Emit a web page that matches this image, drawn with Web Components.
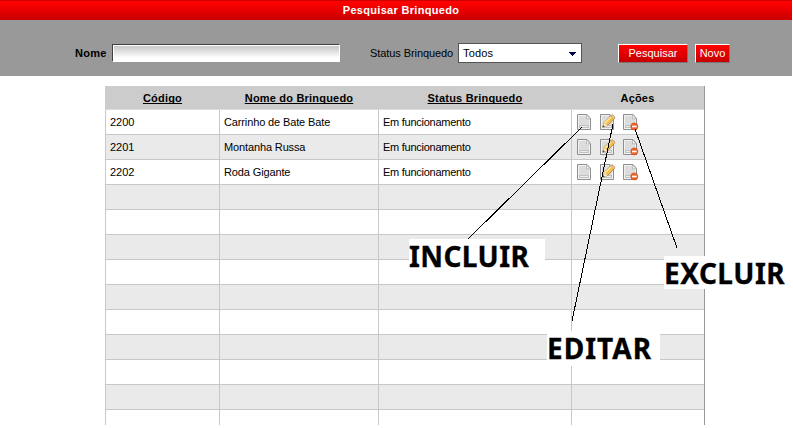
<!DOCTYPE html>
<html lang="pt-BR"><head><meta charset="utf-8"><title>Pesquisar Brinquedo</title>
<style>
html,body{margin:0;background:#fff;overflow:hidden}
body{width:793px;height:428px;position:relative;font:11px/13px "Liberation Sans",Arial,sans-serif;color:#000}
</style></head><body>
<toy-page></toy-page>
<script>
function define(name, html, setup){
  customElements.define(name, class extends HTMLElement{
    connectedCallback(){
      if(this.shadowRoot) return;
      const t=document.createElement('template');
      t.innerHTML=html;
      this.attachShadow({mode:'open'}).append(t.content.cloneNode(true));
      if(setup) setup(this,this.shadowRoot);
    }
  });
}
define('title-bar',`<style>
:host{display:block;box-sizing:border-box;height:20px;border-top:1px solid #c00;background:linear-gradient(#f00,#f00 10%,#c80000);color:#fff;font-weight:bold;text-align:center;padding:3px 0 0 10px;letter-spacing:.31px}
</style><slot></slot>`);
define('text-field',`<style>
:host{display:block;box-sizing:border-box;width:228px;height:18px;border:1px solid #fff;border-top-color:#404040;border-left-color:#404040;padding:1px 0 0 1px;background:#fff}
div{height:15px;background:linear-gradient(#c8c8c8,#fff 80%)}
</style><div></div>`);
define('select-field',`<style>
:host{display:flex;box-sizing:border-box;width:124px;height:20px;border:1px solid #555;background:#fff;justify-content:space-between;align-items:center;padding:0 5px 0 4px;letter-spacing:.15px}
svg{display:block;margin-top:2px}
</style><slot></slot><svg width="7" height="4" shape-rendering="crispEdges"><path d="M0 0H7V1H6V2H5V3H4V4H3V3H2V2H1V1H0Z" fill="#005"/></svg>`);
define('red-button',`<style>
:host{display:block;box-sizing:border-box;height:19px;border:1px solid #fff;border-right-color:#777;border-bottom-color:#777;background:linear-gradient(#f00,#c60000);color:#fff;text-align:center;padding-top:2px;white-space:nowrap}
</style><slot></slot>`);
define('search-bar',`<style>
:host{display:flex;box-sizing:border-box;height:56px;background:#999;padding:24px 0 0 75px;align-items:flex-start}
label{padding-top:3px;white-space:nowrap}
.n{width:37px;font-weight:bold;letter-spacing:.25px}
.s{margin-left:30px;width:88px;letter-spacing:-.08px}
select-field{margin-top:-1px}
.p{width:70px;margin-left:36px}.v{width:35px;margin-left:7px}
</style><label class="n">Nome</label><text-field></text-field><label class="s">Status Brinquedo</label><select-field>Todos</select-field><red-button class="p">Pesquisar</red-button><red-button class="v">Novo</red-button>`);
const page='<path d="M1.5 .5H11L14.5 4.5V15.5H1.5Z" fill="#dcdcdc" stroke="#8e8e8e"/><path d="M2.5 14.5V1.5H10.4L13.5 5V14.5Z" fill="none" stroke="#f2f2f2"/><path d="M10.5 .8V4.8H14.2Z" fill="#f8f8f8" stroke="#a0a0a0" stroke-width=".6"/><path d="M3.5 11.5H12.5V13.5H3.5Z" fill="#ececec" stroke="#b0b0b0" stroke-width=".7"/>';
const extra={
  add:'',
  edit:'<path d="M3.8 13L5.2 8.4 12.4 1.2Q13.2 .6 14 1.2L15.4 2.9Q16.1 3.8 15.4 4.5L8.5 11.6Z" fill="#f5bd4e" stroke="#a8782f" stroke-width=".7"/><path d="M6 8.9L12.2 2.7" stroke="#ffe98c" stroke-width="1.6"/><path d="M11.8 1.9L12.5 1.1Q13.2 .7 14 1.3L15.4 3Q15.9 3.8 15.4 4.4L14.7 5.2Z" fill="#f0c49a" stroke="#b78b5d" stroke-width=".4"/><path d="M3.8 13L5.2 8.6 8.4 11.8Z" fill="#f9e6c8"/><path d="M3.6 13.2L4.4 11.2 5.7 12.4Z" fill="#443a30"/>',
  remove:'<circle cx="12.3" cy="12.4" r="3.5" fill="#ef6428" stroke="#cf4d1a" stroke-width=".7"/><path d="M10 12.5H14.6" stroke="#fff" stroke-width="1.6"/>'
};
define('action-icon','<style>:host{display:block;width:16px;height:17px}svg{display:block;overflow:visible}</style><svg width="16" height="17"></svg>',
 (h,r)=>{r.querySelector('svg').innerHTML=page+extra[h.getAttribute('kind')]});
define('toy-grid',`<style>
:host{display:block;box-sizing:border-box;width:600px;height:339px;margin:10px 0 0 105px;overflow:hidden;border-right:1px solid #999}
.row{display:grid;grid-template-columns:114px 159px 193px 133px;height:25px}
.row>div{box-sizing:border-box;border-left:1px solid #c8c8c8;border-bottom:1px solid #c8c8c8;padding:6px 0 0 4px;white-space:nowrap}
.row.alt>div{background:#eaeaea}
.row>div:nth-child(2){letter-spacing:-.13px}
.row>div:nth-child(3){letter-spacing:-.26px}
.row.head{height:24px;font-weight:bold;text-align:center}
.row.head>div{background:#ccc;border-left-color:#ccc;border-bottom-color:#ddd;padding:6px 0 0;letter-spacing:.2px}
.row.head>div:last-child{padding-right:1px}
u{text-underline-offset:1px;text-decoration-skip-ink:none}
.icons{display:flex;gap:7px}.row>.icons{padding:4px 0 0 4px}
</style><div class="row head"><div><u>Código</u></div><div><u>Nome do Brinquedo</u></div><div><u>Status Brinquedo</u></div><div>Ações</div></div>`,
(h,r)=>{
 const data=[['2200','Carrinho de Bate Bate'],['2201','Montanha Russa'],['2202','Roda Gigante']];
 for(let i=0;i<13;i++){
  const d=data[i],e=document.createElement('div');e.className=i%2?'row alt':'row';
  e.innerHTML=d?`<div>${d[0]}</div><div>${d[1]}</div><div>Em funcionamento</div><div class="icons"><action-icon kind="add"></action-icon><action-icon kind="edit"></action-icon><action-icon kind="remove"></action-icon></div>`:'<div></div><div></div><div></div><div></div>';
  r.append(e);
 }
});
define('call-out',`<style>
:host{position:absolute;display:block;box-sizing:border-box;background:#fff;font:bold 28px/34px "Noto Sans","Open Sans",sans-serif;white-space:nowrap;-webkit-text-stroke:.3px #000}
</style><slot></slot>`);
define('toy-page',`<style>
:host{display:block;width:792px}
.lines{position:absolute;left:0;top:0}
.a{left:409px;top:239px;width:136px;height:30px;letter-spacing:.4px}
.b{left:547px;top:331px;width:113px;height:35px;letter-spacing:1px}
.c{left:664px;top:256px;width:128px;height:33px;letter-spacing:.5px}
</style><title-bar>Pesquisar Brinquedo</title-bar><search-bar></search-bar><toy-grid></toy-grid>
<call-out class="a">INCLUIR</call-out><call-out class="b">EDITAR</call-out><call-out class="c">EXCLUIR</call-out>
<svg class="lines" width="792" height="425" shape-rendering="crispEdges" stroke="#000" fill="none"><path d="M582 127L468 239M613 124L572 321M635 129L677 248"/></svg>`);
</script></body></html>
